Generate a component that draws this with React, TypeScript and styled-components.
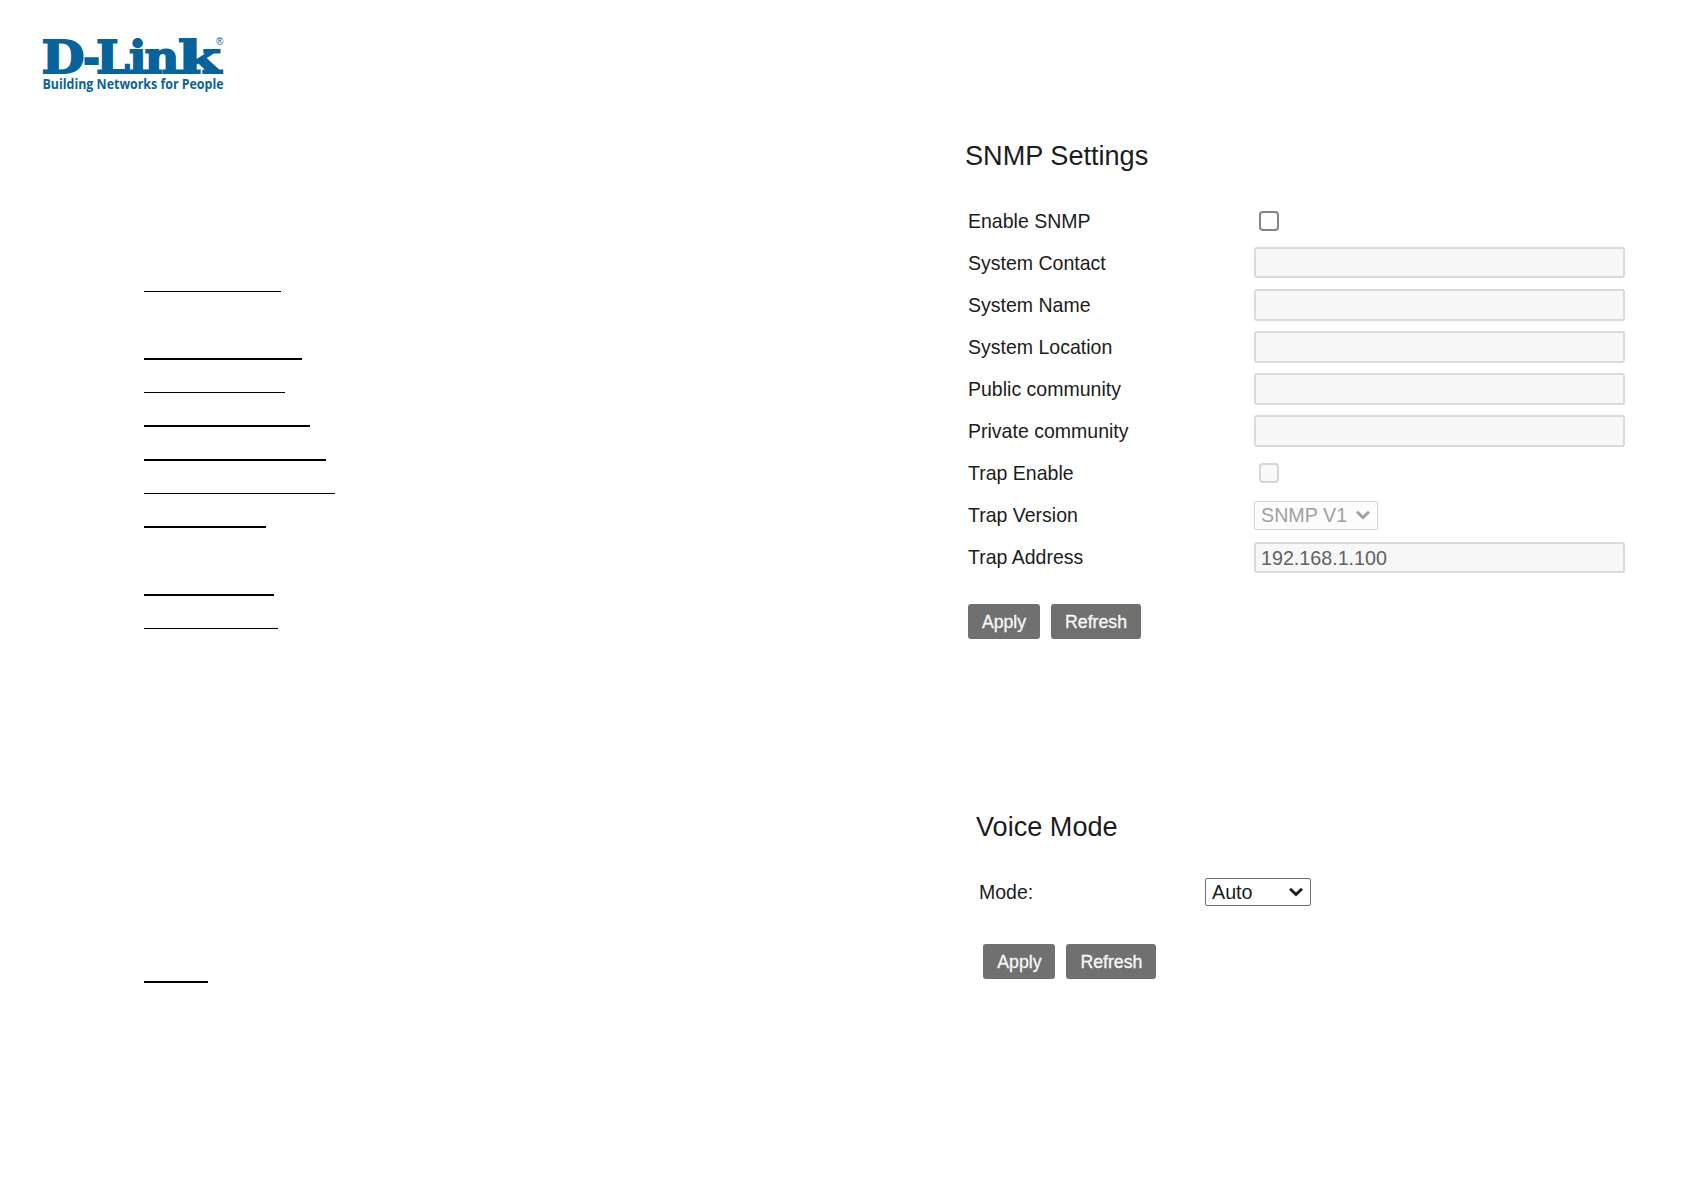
import { FC } from 'react';
import styled, { createGlobalStyle, css } from 'styled-components';

type Rule = { gap: number; width: number; thick?: boolean };

// gap is the blank space above each rule
const INDEX_RULES: Rule[] = [
	{ gap: 0, width: 137 },
	{ gap: 66, width: 158, thick: true },
	{ gap: 32, width: 141 },
	{ gap: 32, width: 166, thick: true },
	{ gap: 32, width: 182, thick: true },
	{ gap: 32, width: 191 },
	{ gap: 32, width: 122, thick: true },
	{ gap: 66, width: 130, thick: true },
	{ gap: 32, width: 134 },
	{ gap: 352, width: 64, thick: true },
];

const TEXT_FIELDS = [
	'System Contact',
	'System Name',
	'System Location',
	'Public community',
	'Private community',
];

const WORDMARK = [
	{ glyph: 'D', x: 1.5, width: 43 },
	{ glyph: '-', x: 43, width: 17 },
	{ glyph: 'L', x: 56, width: 34 },
	{ glyph: 'i', x: 89, width: 17.5 },
	{ glyph: 'n', x: 104.5, width: 35 },
	{ glyph: 'k', x: 138, width: 43 },
];

const Logo: FC = () => (
	<LogoSvg width="190" height="64" viewBox="0 0 190 64" role="img" aria-label="D-Link">
		<Wordmark y="40">
			{WORDMARK.map(({ glyph, x, width }) => (
				<tspan key={glyph} x={x} textLength={width} lengthAdjust="spacingAndGlyphs">
					{glyph}
				</tspan>
			))}
		</Wordmark>
		<Registered x="176" y="12">
			®
		</Registered>
		<Tagline x="2.5" y="56" textLength="181" lengthAdjust="spacingAndGlyphs">
			Building Networks for People
		</Tagline>
	</LogoSvg>
);

const Chevron: FC = () => (
	<svg width="16" height="10" viewBox="0 0 16 10">
		<path d="M2 1.8 L8 7.6 L14 1.8" fill="none" stroke="currentColor" strokeWidth="2.9" />
	</svg>
);

const Actions: FC<{ className?: string }> = ({ className }) => (
	<ButtonRow className={className}>
		<Button $width={72}>Apply</Button>
		<Button $width={90}>Refresh</Button>
	</ButtonRow>
);

const SnmpSettings: FC = () => (
	<SnmpSection>
		<Title>SNMP Settings</Title>
		<SnmpRows>
			<Row>
				<Label>Enable SNMP</Label>
				<Checkbox />
			</Row>
			{TEXT_FIELDS.map((name) => (
				<Row key={name}>
					<Label>{name}</Label>
					<Field />
				</Row>
			))}
			<Row>
				<Label>Trap Enable</Label>
				<Checkbox $disabled />
			</Row>
			<Row>
				<Label>Trap Version</Label>
				<Select $width={124} $disabled>
					SNMP V1
					<Chevron />
				</Select>
			</Row>
			<Row>
				<Label>Trap Address</Label>
				<Field>192.168.1.100</Field>
			</Row>
		</SnmpRows>
		<SnmpActions />
	</SnmpSection>
);

const VoiceMode: FC = () => (
	<VoiceSection>
		<Title>Voice Mode</Title>
		<VoiceRow>
			<Label>Mode:</Label>
			<Select $width={106}>
				Auto
				<Chevron />
			</Select>
		</VoiceRow>
		<VoiceActions />
	</VoiceSection>
);

const App: FC = () => (
	<>
		<GlobalStyle />
		<Page>
			<Header>
				<Logo />
			</Header>
			<Columns>
				<Index>
					{INDEX_RULES.map((rule, i) => (
						<IndexRule key={i} $gap={rule.gap} $width={rule.width} $thick={rule.thick} />
					))}
				</Index>
				<main>
					<SnmpSettings />
					<VoiceMode />
				</main>
			</Columns>
		</Page>
	</>
);

const GlobalStyle = createGlobalStyle`
	* {
		box-sizing: border-box;
	}

	body {
		margin: 0;
		background: #fff;
		color: #1c1c1c;
		font-family: 'Liberation Sans', Arial, sans-serif;
	}
`;

const Page = styled.div`
	width: 1684px;
	height: 1191px;
	overflow: hidden;
`;

const Header = styled.header`
	height: 137px;
	padding: 33px 0 0 40px;
`;

const LogoSvg = styled.svg`
	display: block;
	overflow: visible;
	fill: #07639b;
`;

const Wordmark = styled.text`
	font: bold 45px 'DejaVu Serif', serif;
	stroke: #07639b;
	stroke-width: 1.8px;
`;

const Registered = styled.text`
	font: 10px 'Liberation Sans', sans-serif;
`;

const Tagline = styled.text`
	font: bold 14px 'Open Sans', sans-serif;
`;

const Columns = styled.div`
	display: grid;
	grid-template-columns: 965px 1fr;
`;

const Index = styled.nav`
	padding: 154px 0 0 144px;
`;

const IndexRule = styled.div<{ $gap: number; $width: number; $thick?: boolean }>`
	width: ${({ $width }) => $width}px;
	height: ${({ $thick }) => ($thick ? 2 : 1)}px;
	margin-top: ${({ $gap }) => $gap}px;
	background: #000;
`;

const SnmpSection = styled.section`
	height: 671px;
`;

const VoiceSection = styled.section`
	padding-left: 11px;
`;

const Title = styled.h2`
	margin: 0;
	font-size: 27.1px;
	font-weight: normal;
	line-height: 38px;
	white-space: nowrap;
`;

const SnmpRows = styled.div`
	padding: 24.6px 0 0 3px;
`;

const Row = styled.div`
	display: grid;
	grid-template-columns: 286px 371px;
	align-items: center;
	height: 42.1px;
`;

const VoiceRow = styled(Row)`
	grid-template-columns: 226px auto;
	margin-top: 25px;
	padding-left: 3px;
`;

const Label = styled.span`
	font-size: 20.4px;
	line-height: 24px;
	white-space: nowrap;
	transform: scaleX(0.957);
	transform-origin: left;
`;

const Checkbox = styled.span<{ $disabled?: boolean }>`
	width: 20px;
	height: 20px;
	margin-left: 5.4px;
	border: 2px solid #858585;
	border-radius: 4px;
	${({ $disabled }) =>
		$disabled &&
		css`
			border-color: #d6d6d6;
			background: #f9f9f9;
		`}
`;

const Field = styled.div`
	height: 31.5px;
	padding: 0 5px;
	border: 2px solid #dadada;
	border-radius: 3px;
	background: #f7f7f7;
	color: #626262;
	font-size: 19.7px;
	line-height: 28px;
`;

const Select = styled.div<{ $width: number; $disabled?: boolean }>`
	display: flex;
	align-items: center;
	justify-content: space-between;
	width: ${({ $width }) => $width}px;
	height: 28.5px;
	padding: 0 6px;
	border: 1px solid #6f6f6f;
	border-radius: 2px;
	font-size: 19.7px;
	line-height: 27px;
	white-space: nowrap;
	${({ $disabled }) =>
		$disabled &&
		css`
			border-color: #d4d4d4;
			background: #fcfcfc;
			color: #a0a0a0;
		`}
`;

const ButtonRow = styled.div`
	display: flex;
	gap: 11px;
`;

const SnmpActions = styled(Actions)`
	padding: 26px 0 0 3px;
`;

const VoiceActions = styled(Actions)`
	padding: 31px 0 0 7.4px;
`;

const Button = styled.button<{ $width: number }>`
	width: ${({ $width }) => $width}px;
	height: 35px;
	padding: 2px 0 0;
	border: 0;
	border-radius: 3px;
	background: #707070;
	color: #f8f8f8;
	font: 17.7px 'Liberation Sans', Arial, sans-serif;
	-webkit-text-stroke: 0.3px #f8f8f8;
`;

export default App;
